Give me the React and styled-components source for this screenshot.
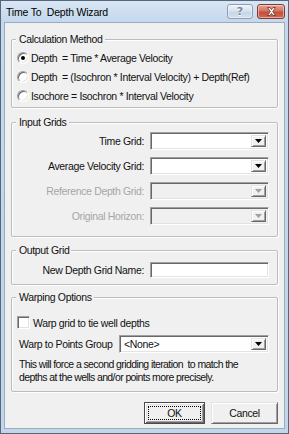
import React from "react";
import styled, { createGlobalStyle, css } from "styled-components";

const GlobalStyle = createGlobalStyle`
  html, body { margin: 0; padding: 0; background: #ffffff; }
  body { font-family: "Liberation Sans", Arial, sans-serif; }
  * { box-sizing: border-box; }
`;

const sunken = css`
  border: 1px solid;
  border-color: #a0a0a0 #ffffff #ffffff #a0a0a0;
  box-shadow: inset 1px 1px 0 #696969, inset -1px -1px 0 #e3e3e3;
`;

const raised = css`
  border: 1px solid;
  border-color: #e3e3e3 #696969 #696969 #e3e3e3;
  box-shadow: inset 1px 1px 0 #ffffff, inset -1px -1px 0 #a0a0a0;
`;

const Window = styled.div`
  width: 289px;
  height: 434px;
  border: 1px solid #56677c;
  background: linear-gradient(#d9e6f4 0px, #c4d7ec 21px, #c2d5ea 100%);
  display: flex;
  flex-direction: column;
  padding: 0 3px 4px 3px;
  font-size: 10.5px;
  letter-spacing: -0.35px;
  color: #111;
`;

const TitleBar = styled.div`
  height: 21px;
  display: flex;
  align-items: center;
  padding-left: 2px;
`;

const Title = styled.div`
  flex: 1;
  font-size: 10.5px;
  letter-spacing: -0.2px;
  white-space: pre;
  color: #000;
`;

const CaptionButtons = styled.div`
  display: flex;
  gap: 4px;
  align-items: center;
`;

const CaptionButton = styled.div`
  height: 15px;
  width: ${(p) => (p.$close ? 28 : 26)}px;
  border-radius: 3px;
  display: flex;
  align-items: center;
  justify-content: center;
  border: 1px solid ${(p) => (p.$close ? "#7d3b34" : "#8a9db4")};
  background: ${(p) =>
    p.$close
      ? "linear-gradient(#e8a596 0%, #d47461 45%, #c4503a 55%, #cd6a55 100%)"
      : "linear-gradient(#eef3f9 0%, #d7e3f0 45%, #c6d6e9 55%, #d2dfee 100%)"};
  box-shadow: inset 0 0 0 1px rgba(255, 255, 255, 0.45);
`;

const HelpGlyph = styled.span`
  font-family: "DejaVu Sans", sans-serif;
  font-weight: bold;
  font-size: 11px;
  letter-spacing: 0;
  color: #7a8796;
  text-shadow: 0 1px 0 #ffffff;
  line-height: 1;
`;

const Client = styled.div`
  flex: 1;
  background: #f0f0f0;
  border: 1px solid #9aacc0;
  padding: 16px 6px 4px 6px;
  display: flex;
  flex-direction: column;
`;

const Group = styled.div`
  position: relative;
  border: 1px solid #bcbcbc;
  box-shadow: 1px 1px 0 #ffffff, inset 1px 1px 0 #ffffff;
  border-radius: 2px;
  margin-top: ${(p) => p.$mt || 0}px;
  height: ${(p) => p.$h}px;
  padding: ${(p) => p.$pad};
`;

const Legend = styled.span`
  position: absolute;
  top: -7px;
  left: 4px;
  line-height: 12px;
  padding: 0 2px 0 3px;
  background: #f0f0f0;
`;

const RadioRow = styled.div`
  height: 19px;
  display: flex;
  align-items: center;
  white-space: pre;
`;

const Radio = styled.span`
  position: relative;
  width: 12px;
  height: 12px;
  border-radius: 50%;
  background: #ffffff;
  ${sunken};
  margin-right: 2px;
  flex: none;
  &::after {
    content: "";
    display: ${(p) => (p.$checked ? "block" : "none")};
    position: absolute;
    left: 3px;
    top: 3px;
    width: 4px;
    height: 4px;
    border-radius: 50%;
    background: #000;
  }
`;

const Term = styled.span`
  display: inline-block;
  flex: none;
  width: 31px;
`;

const FormGrid = styled.div`
  display: grid;
  grid-template-columns: 1fr 119px;
  grid-auto-rows: ${(p) => p.$rowH || 18}px;
  column-gap: 6px;
  row-gap: 7px;
  align-items: center;
`;

const FieldLabel = styled.span`
  text-align: right;
  white-space: nowrap;
  color: ${(p) => (p.$disabled ? "#a6a6a6" : "#111")};
`;

const Combo = styled.div`
  width: ${(p) => p.$w || 119}px;
  height: 18px;
  ${sunken};
  background: ${(p) => (p.$disabled ? "#f0f0f0" : "#ffffff")};
  display: flex;
  align-items: stretch;
  padding: 2px;
`;

const ComboText = styled.span`
  flex: 1;
  padding-left: 2px;
  line-height: 12px;
  white-space: nowrap;
`;

const DropButton = styled.span`
  width: 15px;
  background: #f0f0f0;
  ${raised};
  display: flex;
  align-items: center;
  justify-content: center;
`;

const TextField = styled.div`
  width: 119px;
  height: 16px;
  ${sunken};
  background: #ffffff;
`;

const CheckRow = styled.div`
  display: flex;
  align-items: center;
  height: 13px;
  gap: 2px;
`;

const Checkbox = styled.span`
  width: 13px;
  height: 13px;
  margin-right: 1px;
  background: #ffffff;
  ${sunken};
  flex: none;
`;

const PointsRow = styled.div`
  display: flex;
  align-items: center;
  justify-content: space-between;
  margin-top: 6px;
`;

const PointsLabel = styled.span`
  padding-left: 2px;
`;

const Note = styled.p`
  margin: 5px 0 0 2px;
  line-height: 13px;
  white-space: pre;
  letter-spacing: -0.6px;
`;

const ButtonRow = styled.div`
  display: flex;
  justify-content: flex-end;
  gap: 6px;
  margin-top: 10px;
`;

const PushButton = styled.div`
  position: relative;
  width: ${(p) => p.$w}px;
  height: 22px;
  background: #f0f0f0;
  display: flex;
  align-items: center;
  justify-content: center;
  ${(p) =>
    p.$default
      ? css`
          border: 1px solid #4a4a4a;
          box-shadow: inset 1px 1px 0 #ffffff, inset -1px -1px 0 #696969,
            inset 2px 2px 0 #e3e3e3, inset -2px -2px 0 #a0a0a0;
          &::after {
            content: "";
            position: absolute;
            inset: 3px;
            border: 1px dotted #000;
          }
        `
      : raised};
`;

function Arrow({ disabled }) {
  return (
    <svg width="7" height="4" viewBox="0 0 7 4">
      <polygon points="0,0 7,0 3.5,4" fill={disabled ? "#a0a0a0" : "#000"} />
    </svg>
  );
}

function ComboBox({ disabled, value, width }) {
  return (
    <Combo $disabled={disabled} $w={width}>
      <ComboText>{value}</ComboText>
      <DropButton>
        <Arrow disabled={disabled} />
      </DropButton>
    </Combo>
  );
}

const inputGrids = [
  { label: "Time Grid:" },
  { label: "Average Velocity Grid:" },
  { label: "Reference Depth Grid:", disabled: true },
  { label: "Original Horizon:", disabled: true },
];

export default function App() {
  return (
    <>
      <GlobalStyle />
      <Window>
        <TitleBar>
          <Title>{"Time To  Depth Wizard"}</Title>
          <CaptionButtons>
            <CaptionButton>
              <HelpGlyph>?</HelpGlyph>
            </CaptionButton>
            <CaptionButton $close>
              <svg width="11" height="9" viewBox="0 0 11 9">
                <path
                  d="M1.5 0.5h2.5l1.5 2l1.5-2h2.5l-2.8 4l2.8 4h-2.5l-1.5-2l-1.5 2h-2.5l2.8-4z"
                  fill="#ffffff"
                  stroke="#6b2a22"
                  strokeWidth="0.8"
                  strokeLinejoin="round"
                />
              </svg>
            </CaptionButton>
          </CaptionButtons>
        </TitleBar>
        <Client>
          <Group $h={69} $pad="8px 4px 1px 5px">
            <Legend>Calculation Method</Legend>
            <RadioRow>
              <Radio $checked />
              <Term>Depth</Term>= Time * Average Velocity
            </RadioRow>
            <RadioRow>
              <Radio />
              <Term>Depth</Term>= (Isochron * Interval Velocity) + Depth(Ref)
            </RadioRow>
            <RadioRow>
              <Radio />
              Isochore = Isochron * Interval Velocity
            </RadioRow>
          </Group>

          <Group $mt={14} $h={115} $pad="9px 8px 11px 8px">
            <Legend>Input Grids</Legend>
            <FormGrid>
              {inputGrids.map((g) => (
                <React.Fragment key={g.label}>
                  <FieldLabel $disabled={g.disabled}>{g.label}</FieldLabel>
                  <ComboBox disabled={g.disabled} />
                </React.Fragment>
              ))}
            </FormGrid>
          </Group>

          <Group $mt={13} $h={35} $pad="11px 8px 0 8px">
            <Legend>Output Grid</Legend>
            <FormGrid $rowH={16}>
              <FieldLabel>New Depth Grid Name:</FieldLabel>
              <TextField />
            </FormGrid>
          </Group>

          <Group $mt={12} $h={95} $pad="18px 8px 0 5px">
            <Legend>Warping Options</Legend>
            <CheckRow>
              <Checkbox />
              Warp grid to tie well depths
            </CheckRow>
            <PointsRow>
              <PointsLabel>Warp to Points Group</PointsLabel>
              <ComboBox value="<None>" width={150} />
            </PointsRow>
            <Note>
              {"This will force a second gridding iteration  to match the\ndepths at the wells and/or points more precisely."}
            </Note>
          </Group>

          <ButtonRow>
            <PushButton $default $w={61}>OK</PushButton>
            <PushButton $w={67}>Cancel</PushButton>
          </ButtonRow>
        </Client>
      </Window>
    </>
  );
}
